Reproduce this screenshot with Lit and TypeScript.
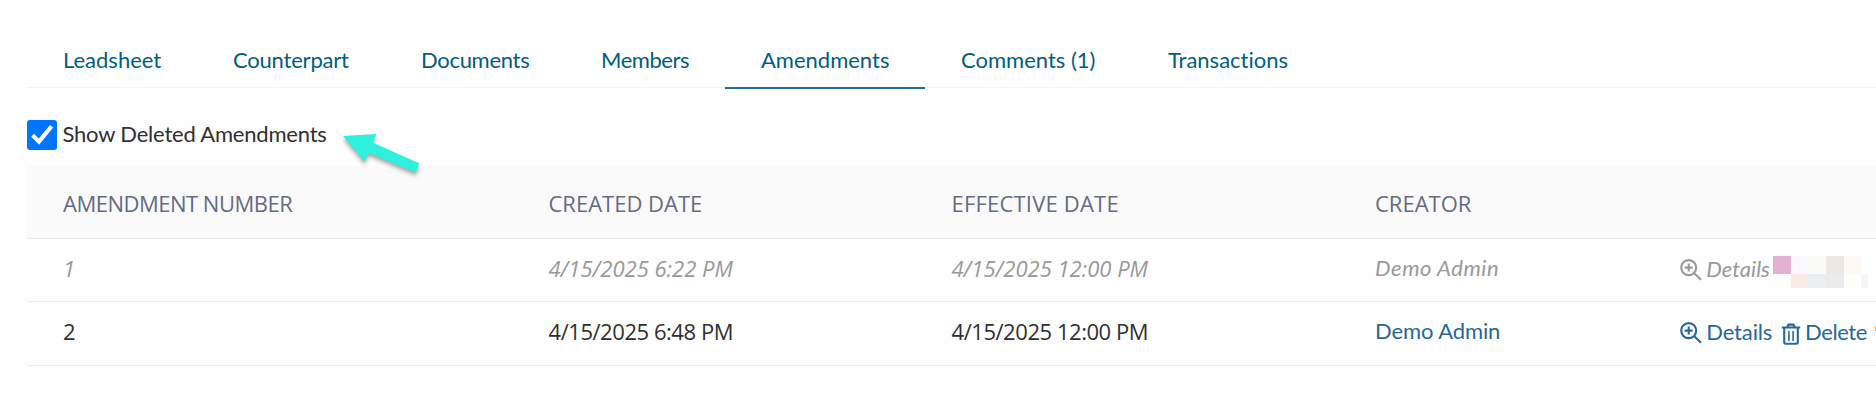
import { LitElement, html, css, svg } from 'lit';
import { customElement } from 'lit/decorators.js';

const tabs = [
  { label: 'Leadsheet', cls: 'leadsheet' },
  { label: 'Counterpart', cls: 'counterpart' },
  { label: 'Documents', cls: 'documents' },
  { label: 'Members', cls: 'members' },
  { label: 'Amendments', cls: 'amendments active' },
  { label: 'Comments (1)', cls: 'comments' },
  { label: 'Transactions', cls: 'transactions' },
];

const zoomIcon = html`<svg class="icon zoom" viewBox="0 0 22 22" aria-hidden="true">
  ${svg`<circle cx="8.7" cy="8.6" r="7.5"/><path d="M8.7 4.6v8M4.7 8.6h8M14 14l7 6.8"/>`}
</svg>`;

const trashIcon = html`<svg class="icon trash" viewBox="0 0 20 22" aria-hidden="true">
  ${svg`<path d="M.8 4.5h18.4M6.2 4.3l1.3-2.7h5l1.3 2.7M3.2 4.8v14.6q0 1.3 1.3 1.3h11q1.3 0 1.3-1.3V4.8"/><path class="thin" d="M7.9 8v10M12.1 8v10"/>`}
</svg>`;

@customElement('app-root')
export class AppRoot extends LitElement {
  static styles = css`
    :host {
      display: block;
      position: relative;
      height: 410px;
      overflow: hidden;
      box-sizing: border-box;
      padding: 32px 0 0 27px;
      background: #fefefe;
      color: #303030;
      font: 400 22px/26px Lato, sans-serif;
      font-variant-ligatures: none;
      white-space: nowrap;
    }
    .tabs {
      display: grid;
      grid-template-columns: 170px 188px 180px 160px 200px 207px 193px;
      height: 55px;
      border-bottom: 1px solid #f4f4f5;
      color: #005f80;
    }
    .tab {
      height: 55px;
      line-height: 56px;
      padding-left: 36px;
    }
    .active { height: 55px; border-bottom: 2px solid #27679a; }
    .leadsheet { letter-spacing: 0; }
    .counterpart { letter-spacing: -0.2px; }
    .documents { letter-spacing: -0.3px; }
    .members { letter-spacing: -0.45px; }
    .filter {
      display: flex;
      align-items: center;
      gap: 6px;
      height: 30px;
      margin: 32px 0 16px;
    }
    .check {
      width: 30px;
      height: 30px;
      border-radius: 3px;
      background: #0075ff;
    }
    .filter span { margin-left: -0.5px; letter-spacing: -0.2px; line-height: 28px; padding-bottom: 3px; }
    .row {
      display: grid;
      grid-template-columns: 485.5px 403px 423.5px 304px 1fr;
      align-items: center;
      padding-left: 36px;
      border-bottom: 1px solid #ebebec;
      box-sizing: border-box;
    }
    .head, .date, .num { font-family: "Open Sans", sans-serif; }
    .head {
      height: 73px;
      padding-top: 1px;
      background: #fafafa;
      color: #646b85;
    }
    .tight { letter-spacing: -0.5px; }
    .wide { letter-spacing: 0.2px; }
    .date { letter-spacing: -0.45px; }
    .deleted {
      height: 63px;
      padding-bottom: 5px;
      color: #999;
      font-style: italic;
    }
    .deleted .date { letter-spacing: 0; }
    .deleted .creator { letter-spacing: 0.55px; }
    .current { height: 64px; padding-bottom: 6px; }
    .link { color: #27679a; }
    .current .creator { letter-spacing: -0.1px; }
    .actions { display: flex; align-items: center; padding-top: 2px; }
    .icon {
      flex: none;
      fill: none;
      stroke: currentColor;
      stroke-width: 2.1;
      margin-top: 3px;
    }
    .zoom { width: 22px; height: 22px; margin-left: 0.5px; margin-right: 4.8px; }
    .trash { width: 20px; height: 22px; margin: 4px 4px 0 8.8px; }
    .thin { stroke-width: 1.6; }
    .current .details { letter-spacing: -0.15px; }
    .delete { letter-spacing: -0.4px; }
    .mosaic {
      display: grid;
      grid-template-columns: 18px 17px 18px 18px 17px 7px;
      grid-template-rows: 18px 14px;
      margin: 6px 0 0 3.2px;
    }
    .m1 { background: #e3b1d0; } .m2 { background: #fcf6ff; }
    .m3 { background: #fbfcfa; } .m4 { background: #ede8e4; }
    .m5 { background: #fff9f2; } .m6 { background: #fbfffe; }
    .m7 { background: #fefdfe; } .m8 { background: #f8ece6; }
    .m9 { background: #ecedef; } .m10 { background: #e9ebed; }
    .m11 { background: #fdfdfa; } .m12 { background: #f4f5f7; }
    .sliver {
      flex: none;
      width: 8px;
      height: 5px;
      margin: -6px 0 0 8px;
      background: #f9b233;
    }
    .arrow {
      position: absolute;
      left: 335px;
      top: 125px;
      width: 95px;
      height: 60px;
      filter: drop-shadow(0 3px 2px rgba(0, 0, 0, 0.35));
    }
  `;

  render() {
    return html`
      <nav class="tabs">
        ${tabs.map((t) => html`<div class="tab ${t.cls}">${t.label}</div>`)}
      </nav>
      <label class="filter">
        <svg class="check" viewBox="0 0 30 30">
          <path d="M5.6 15.2L12 21.6L24.6 6.2" fill="none" stroke="#fff" stroke-width="4.1" />
        </svg>
        <span>Show Deleted Amendments</span>
      </label>
      <div class="row head">
        <div class="tight">AMENDMENT NUMBER</div>
        <div>CREATED DATE</div>
        <div class="wide">EFFECTIVE DATE</div>
        <div>CREATOR</div>
      </div>
      <div class="row deleted">
        <div class="num">1</div>
        <div class="date">4/15/2025 6:22 PM</div>
        <div class="date">4/15/2025 12:00 PM</div>
        <div class="creator">Demo Admin</div>
        <div class="actions">
          ${zoomIcon}<span class="details">Details</span>
          <div class="mosaic">
            ${Array.from({ length: 12 }, (_, i) => html`<i class="m${i + 1}"></i>`)}
          </div>
        </div>
      </div>
      <div class="row current">
        <div class="num">2</div>
        <div class="date">4/15/2025 6:48 PM</div>
        <div class="date">4/15/2025 12:00 PM</div>
        <div class="creator link">Demo Admin</div>
        <div class="actions link">
          ${zoomIcon}<span class="details">Details</span>${trashIcon}<span class="delete">Delete</span>
          <i class="sliver"></i>
        </div>
      </div>
      <svg class="arrow" viewBox="335 125 95 60">
        <path fill="#2df1dd" d="M343 136L376.3 134L373 142.8L419 163.2L415.8 172.5L368.5 153L364.7 161.7Z" />
      </svg>
    `;
  }
}
